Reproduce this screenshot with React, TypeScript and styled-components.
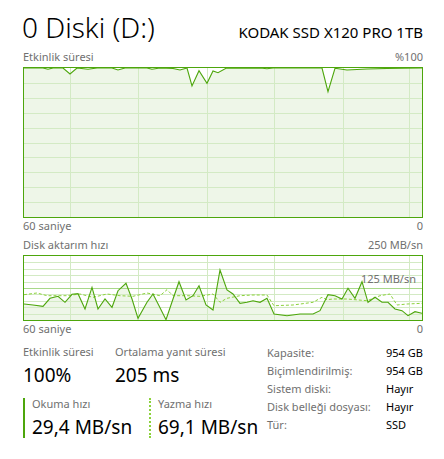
import React from 'react';
import styled, {createGlobalStyle} from "styled-components";

const GlobalStyle = createGlobalStyle`
  body {
    margin: 0;
    background: #fff;
  }
`

const GREEN = "#4da60c";
const LIGHT = "#8cd23c";
const GRID = "#d3eac4";

type Pt = [number, number];

const activity: Pt[] = [
  [0, 0], [19, 0], [24, 1.3], [29, 0], [39, 0], [46, 6], [53, 0], [64, 1.3], [73, 0],
  [88, 0], [94, 2], [101, 0], [123, 0], [128, 1.3], [136, 0], [149, 0.5], [156, 2],
  [163, 0], [168, 18], [175, 2.7], [183, 15.3], [189, 3], [194, 4.7], [202, 0.3],
  [236, 0], [243, 0.8], [249, 0], [298, 0], [304, 23.7], [311, 0.3], [323, 2],
  [343, 1], [363, 0.5], [398, 0],
];

const readLine: Pt[] = [
  [0, 48], [9, 49], [19, 50.3], [26, 42.3], [34, 40.3], [41, 46.3], [48, 38.3], [54, 37.7],
  [61, 53], [68, 31.3], [74, 53], [81, 43], [88, 51.3], [94, 34.7], [102, 27.3], [108, 43],
  [114, 62.3], [123, 46.3], [129, 38], [135, 49.7], [142, 63.7], [149, 43], [155, 25.7],
  [162, 44], [169, 39.7], [175, 29.7], [182, 49], [189, 54], [196, 14], [203, 34],
  [209, 38], [216, 47.3], [223, 46.3], [229, 44.7], [236, 46.3], [243, 42.3], [250, 58],
  [263, 59.7], [276, 58], [289, 58], [296, 54.7], [304, 38.7], [311, 39.7], [318, 43],
  [324, 32.3], [331, 42.3], [338, 25.7], [344, 46.3], [351, 41.3], [358, 46.3], [364, 46.3],
  [371, 53], [378, 54.7], [384, 59.7], [391, 55.7], [398, 57.3],
];

const writeLine: Pt[] = [
  [0, 38.7], [13, 37], [23, 39.7], [43, 39.7], [56, 38], [69, 41.3], [83, 38], [96, 39.7],
  [109, 40.3], [123, 37], [136, 39.7], [143, 33.7], [149, 39.7], [163, 39.7], [176, 40.3],
  [189, 38], [196, 46.3], [203, 42.3], [216, 39.7], [229, 39], [243, 39], [250, 49.7],
  [269, 49], [289, 46.3], [298, 41.3], [303, 43.7], [309, 43], [323, 43], [343, 44.7],
  [356, 39.7], [366, 38], [373, 49], [383, 48], [398, 47.3],
];

const vGrid = [46, 114, 183, 250, 319, 385];

const toPath = (pts: Pt[]) => pts.map(([x, y], i) => `${i ? "L" : "M"}${x} ${y}`).join(" ");
const toArea = (pts: Pt[], h: number) => `${toPath(pts)} L398 ${h} L0 ${h} Z`;

type GraphProps = {
  height: number;
  children?: React.ReactNode;
  lines: Pt[];
  dashed?: Pt[];
  mid?: boolean;
}

const Graph: React.FC<GraphProps> = ({height, lines, dashed, mid, children}) => {
  const rows = Array.from({length: 9}, (_, i) => Math.round(((i + 1) * height) / 10) + 0.5);
  return (
    <ChartBox $h={height}>
      <svg width={398} height={height} viewBox={`0 0 398 ${height}`}>
        <path d={toArea(lines, height)} fill="#eef6e8"/>
        <g stroke={GRID} strokeWidth={1} shapeRendering="crispEdges">
          {rows.map(y => <line key={y} x1={0} x2={398} y1={y} y2={y}/>)}
          {vGrid.map(x => <line key={x} x1={x + 0.5} x2={x + 0.5} y1={0} y2={height}/>)}
        </g>
        {mid && <line x1={0} x2={398} y1={height / 2 + 0.5} y2={height / 2 + 0.5} stroke="#a8d88a" shapeRendering="crispEdges"/>}
        {dashed && <path d={toPath(dashed)} fill="none" stroke={LIGHT} strokeWidth={1} strokeDasharray="3 2"/>}
        <path d={toPath(lines)} fill="none" stroke={GREEN} strokeWidth={1.1}/>
      </svg>
      {children}
    </ChartBox>
  );
};

const App: React.FC = () => {
  return (
    <Page>
      <GlobalStyle/>
      <Header>
        <Title>0 Diski (D:)</Title>
        <Model>KODAK SSD X120 PRO 1TB</Model>
      </Header>

      <AxisRow $gap={4}>
        <span>Etkinlik süresi</span>
        <span>%100</span>
      </AxisRow>
      <Graph height={149} lines={activity}/>
      <AxisRow>
        <span>60 saniye</span>
        <span>0</span>
      </AxisRow>

      <AxisRow $gap={3}>
        <span>Disk aktarım hızı</span>
        <span>250 MB/sn</span>
      </AxisRow>
      <Graph height={64} lines={readLine} dashed={writeLine} mid>
        <MidLabel>125 MB/sn</MidLabel>
      </Graph>
      <AxisRow>
        <span>60 saniye</span>
        <span>0</span>
      </AxisRow>

      <Stats>
        <Left>
          <StatGrid>
            <Stat>
              <StatLabel>Etkinlik süresi</StatLabel>
              <StatValue>100%</StatValue>
            </Stat>
            <Stat>
              <StatLabel>Ortalama yanıt süresi</StatLabel>
              <StatValue>205 ms</StatValue>
            </Stat>
          </StatGrid>
          <SpeedGrid>
            <Speed $dotted={false}>
              <SpeedLabel>Okuma hızı</SpeedLabel>
              <SpeedValue>29,4 MB/sn</SpeedValue>
            </Speed>
            <Speed $dotted>
              <SpeedLabel>Yazma hızı</SpeedLabel>
              <SpeedValue>69,1 MB/sn</SpeedValue>
            </Speed>
          </SpeedGrid>
        </Left>
        <Props>
          <PropKey>Kapasite:</PropKey><PropVal>954 GB</PropVal>
          <PropKey>Biçimlendirilmiş:</PropKey><PropVal>954 GB</PropVal>
          <PropKey>Sistem diski:</PropKey><PropVal>Hayır</PropVal>
          <PropKey>Disk belleği dosyası:</PropKey><PropVal>Hayır</PropVal>
          <PropKey>Tür:</PropKey><PropVal>SSD</PropVal>
        </Props>
      </Stats>
    </Page>
  );
};

export default App;

const Page = styled.div`
  width: 444px;
  height: 459px;
  box-sizing: border-box;
  padding: 9px 21px 0 23px;
  background: #fff;
  font-family: "Noto Sans", "Open Sans", sans-serif;
  color: #000;
  overflow: hidden;
`
const Header = styled.div`
  display: flex;
  justify-content: space-between;
  align-items: baseline;
  height: 36px;
`
const Title = styled.div`
  font-size: 28px;
  font-weight: 300;
  line-height: 36px;
  margin-left: -1px;
`
const Model = styled.div`
  font-size: 15px;
  line-height: 20px;
`
const AxisRow = styled.div<{ $gap?: number }>`
  display: flex;
  justify-content: space-between;
  margin-top: ${p => p.$gap ?? 0}px;
  margin-bottom: 2px;
  font-size: 11px;
  line-height: 16px;
  color: #707070;
`
const ChartBox = styled.div<{ $h: number }>`
  position: relative;
  height: ${p => p.$h}px;
  border: 1px solid ${GREEN};
  background: #fff;

  svg {
    display: block;
  }
`
const MidLabel = styled.div`
  position: absolute;
  top: 16px;
  right: 6px;
  font-size: 11px;
  line-height: 14px;
  color: #707070;
`
const Stats = styled.div`
  display: grid;
  grid-template-columns: 244px 1fr;
  margin-top: 7px;
`
const Left = styled.div`
  display: flex;
  flex-direction: column;
`
const StatGrid = styled.div`
  display: grid;
  grid-template-columns: 92px 1fr;
`
const Stat = styled.div`
  display: flex;
  flex-direction: column;
`
const StatLabel = styled.div`
  font-size: 11px;
  line-height: 16px;
  color: #707070;
  white-space: nowrap;
`
const StatValue = styled.div`
  font-size: 19px;
  line-height: 26px;
  margin-top: 2px;
`
const SpeedGrid = styled.div`
  display: grid;
  grid-template-columns: 126px 1fr;
  margin-top: 10px;
`
const Speed = styled.div<{ $dotted: boolean }>`
  display: flex;
  flex-direction: column;
  height: 40px;
  padding-left: 7px;
  border-left: 2px ${p => (p.$dotted ? "dotted" : "solid")} ${p => (p.$dotted ? LIGHT : GREEN)};
`
const SpeedLabel = styled.div`
  font-size: 11px;
  line-height: 12px;
  color: #707070;
`
const SpeedValue = styled.div`
  font-size: 19px;
  line-height: 24px;
  margin-top: 5px;
  white-space: nowrap;
`
const Props = styled.div`
  display: grid;
  grid-template-columns: 119px 1fr;
  align-content: start;
  font-size: 11px;
  line-height: 18px;
  white-space: nowrap;
`
const PropKey = styled.div`
  color: #707070;
`
const PropVal = styled.div`
  color: #000;
`
